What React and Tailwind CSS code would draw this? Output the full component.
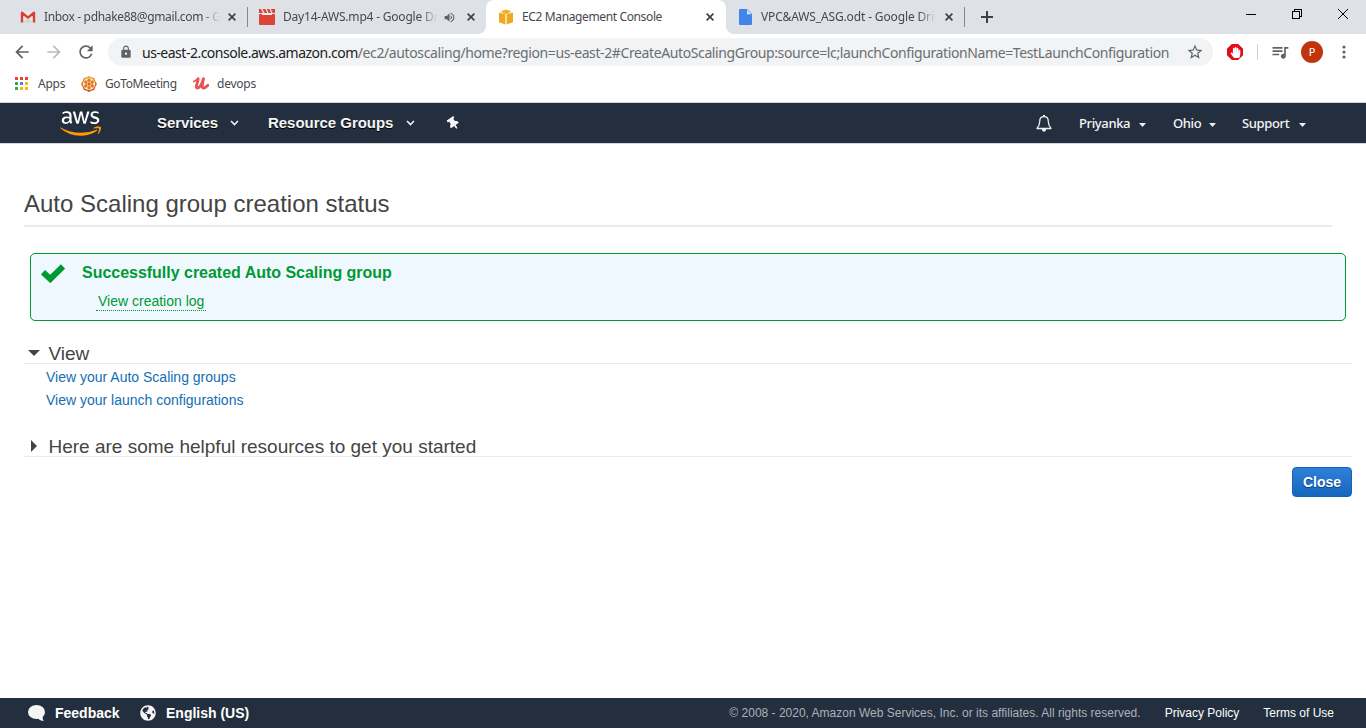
import React from "react";
import { FaAws, FaThumbtack, FaGlobeAmericas, FaHandPaper } from "react-icons/fa";
import { MdArrowBack, MdArrowForward, MdRefresh, MdLock, MdStarBorder, MdQueueMusic, MdVolumeUp } from "react-icons/md";

const Gmail = () => (
  <svg viewBox="0 0 16 12" className="h-3 w-4 shrink-0">
    <rect x="1" y="0.5" width="14" height="11" fill="#e9e9e9" />
    <path d="M3 11.5 8 7l5 4.5z" fill="#d5d5d5" />
    <path d="M2 11.5V1.8L8 6.6l6-4.800v9.700" fill="none" stroke="#d93f32" strokeWidth="2.4" strokeLinejoin="round" />
  </svg>
);

const Clapper = () => (
  <svg viewBox="0 0 16 16" className="size-4 shrink-0">
    <rect x="0" y="5" width="16" height="11" rx="1" fill="#db4437" />
    <path d="M0 0h2l2 4H0zM3.6 0h2.6l2 4H5.6zM7.7 0h2.6l2 4H9.7zM11.8 0H16v4h-2.2z" fill="#db4437" />
    <path d="M3 5.3h10" stroke="#fff" strokeWidth="1.2" />
  </svg>
);

const Cube = () => (
  <svg viewBox="0 0 16 16" className="size-4 shrink-0">
    <path d="M8 0.5 13.5 2.3 8 4 2.5 2.3z" fill="#f6b73c" />
    <path d="M1 3.2 7.5 5v10.5L1 13.3zM15 3.2 8.5 5v10.5l6.5-2.2z" fill="#efa91f" />
    <path d="M1 3.4 8 5l7-1.6M8 5v10.5" fill="none" stroke="#fde9bd" strokeWidth="0.9" />
    <path d="M4.5 1.8 8 1l3.5.8v2.4L8 5 4.5 4.2z" fill="#f4b02b" />
  </svg>
);

const Doc = () => (
  <svg viewBox="0 0 13 16" className="h-4 w-[13px] shrink-0">
    <path d="M1 0h7l5 5v10a1 1 0 0 1-1 1H1a1 1 0 0 1-1-1V1a1 1 0 0 1 1-1z" fill="#4285ea" />
    <path d="M8 0.8v4.4h4.4z" fill="#dce8fc" />
  </svg>
);

const Cross = () => (
  <svg viewBox="0 0 8 8" className="size-2 shrink-0">
    <path d="M0.6 0.6l6.8 6.8M7.4 0.6L0.6 7.4" stroke="#3c4043" strokeWidth="1.6" />
  </svg>
);

const APP_COLORS = [
  "fill-[#ea4335]", "fill-[#ea4335]", "fill-[#ea4335]",
  "fill-[#34a853]", "fill-[#4285f4]", "fill-[#fbbc05]",
  "fill-[#34a853]", "fill-[#fbbc05]", "fill-[#fbbc05]",
];
const Apps = () => (
  <svg viewBox="0 0 13 13" className="size-[13px] shrink-0">
    {APP_COLORS.map((c, i) => (
      <rect key={i} x={(i % 3) * 5} y={Math.floor(i / 3) * 5} width="3" height="3" className={c} />
    ))}
  </svg>
);

const Meeting = () => (
  <svg viewBox="0 0 16 16" className="size-4 shrink-0">
    <linearGradient id="petal" x1="0" y1="0" x2="0" y2="1">
      <stop offset="0" stopColor="#efa02c" />
      <stop offset="1" stopColor="#cf4a1c" />
    </linearGradient>
    <path d="M8 0l2.3 1.3L13.2 2l1 2.8L16 8l-1.8 3.2-1 2.8-2.9.7L8 16l-2.3-1.3L2.8 14l-1-2.8L0 8l1.8-3.2 1-2.8 2.9-.7z" fill="url(#petal)" />
    <circle cx="8" cy="8" r="6" fill="#fff4e0" />
    {[0, 60, 120, 180, 240, 300].map((a) => (
      <circle key={a} cx="8" cy="4.300" r="1.7" fill="#e07a1f" transform={`rotate(${a} 8 8)`} />
    ))}
    <circle cx="8" cy="8" r="1.7" fill="#d8641b" />
  </svg>
);

const Udemy = () => (
  <svg viewBox="0 0 16 13" className="h-[13px] w-4 shrink-0">
    <path d="M0.800 4.500C2.500 4 4 2.500 5 1.200" fill="none" stroke="#ea5252" strokeWidth="1.800" strokeLinecap="round" />
    <path d="M5.200 1.800C4.800 5 1.800 11 4.500 11c2.500 0 4.500-4.500 6-9.300C9.800 5.500 8 11 10.300 11c1.500 0 3.200-1.200 4.700-2.800" fill="none" stroke="#ea5252" strokeWidth="2.800" strokeLinecap="round" strokeLinejoin="round" />
  </svg>
);

const Chevron = () => (
  <svg viewBox="0 0 9 6" className="h-1.5 w-[9px] shrink-0">
    <path d="M1 1l3.500 3.500L8 1" fill="none" stroke="#eee" strokeWidth="1.700" />
  </svg>
);

const Caret = () => (
  <svg viewBox="0 0 7 4" className="mt-0.5 h-1 w-[7px] shrink-0">
    <path d="M0 0h7L3.500 4z" fill="#eee" />
  </svg>
);

const Bell = () => (
  <svg viewBox="0 0 16 17" className="h-[17px] w-4 shrink-0">
    <path d="M8 1.700C5 1.700 3.700 4 3.700 6.500c0 3.500-.9 5-2.700 7h14c-1.800-2-2.700-3.500-2.700-7C12.300 4 11 1.700 8 1.700z" fill="none" stroke="#eee" strokeWidth="1.300" strokeLinejoin="round" />
    <path d="M7 0h2v2H7zM5.800 14h4.400c0 1.500-1 2.700-2.200 2.700S5.800 15.500 5.800 14z" fill="#eee" />
  </svg>
);

const Bubble = () => (
  <svg viewBox="0 0 17 16" className="ml-7 h-4 w-[17px] shrink-0" fill="#f5f5f5">
    <ellipse cx="8.500" cy="7" rx="8.500" ry="7" />
    <path d="M10 13.500c1.500 1.500 3 2.300 5.800 2.500-1-1.200-1.300-2.500-1-5z" />
  </svg>
);

function TabStrip() {
  return (
    <div className="flex h-[34px] bg-white text-[12px] text-[#45494d]">
      <div className="flex w-[486px] rounded-br-lg bg-[#dee1e6]">
        <div className="flex w-[247px] items-center pl-5">
          <Gmail />
          <span className="ml-2 w-[176px] overflow-hidden whitespace-nowrap tracking-[-0.34px] mask-r-from-90%">Inbox - pdhake88@gmail.com - Gmail</span>
          <span className="ml-2"><Cross /></span>
        </div>
        <div className="flex w-[239px] items-center">
          <span className="h-5 w-px bg-[#85888c]" />
          <span className="ml-[11px]"><Clapper /></span>
          <span className="ml-2 w-[154px] overflow-hidden whitespace-nowrap tracking-[-0.2px] mask-r-from-90%">Day14-AWS.mp4 - Google Drive</span>
          <MdVolumeUp className="ml-[6px] size-[13px] shrink-0 text-[#5f6368]" />
          <span className="ml-[11px]"><Cross /></span>
        </div>
      </div>
      <div className="bg-[#dee1e6]">
        <div className="flex h-[34px] w-[240px] items-center rounded-t-lg bg-white pl-3">
          <Cube />
          <span className="ml-2 w-[180px] whitespace-nowrap tracking-[-0.37px]">EC2 Management Console</span>
          <span className="ml-[4px]"><Cross /></span>
        </div>
      </div>
      <div className="flex flex-1 items-center rounded-bl-lg bg-[#dee1e6]">
        <div className="flex h-[34px] w-[238px] items-center pl-[13px]">
          <Doc />
          <span className="ml-[9px] w-[175px] overflow-hidden whitespace-nowrap tracking-[-0.14px] mask-r-from-90%">VPC&amp;AWS_ASG.odt - Google Drive</span>
          <span className="ml-[9px]"><Cross /></span>
        </div>
        <span className="h-5 w-px bg-[#85888c]" />
        <svg viewBox="0 0 12 12" className="ml-4 size-3"><path d="M6 0v12M0 6h12" stroke="#3c4043" strokeWidth="2" /></svg>
        <svg viewBox="0 0 102 12" className="mb-1.5 ml-auto mr-[18px] h-3 w-[102px]" fill="none" stroke="#000" shapeRendering="crispEdges">
          <path d="M0 6.500h10M46.500 3.500h7v7h-7zM48.500 3.500v-2h7v7h-2" />
          <path d="M92 1l10 10M102 1l-10 10" shapeRendering="auto" />
        </svg>
      </div>
    </div>
  );
}

function Toolbar() {
  return (
    <div className="flex h-9 items-center bg-white text-[#5f6368]">
      <MdArrowBack className="ml-[12px] size-5" />
      <MdArrowForward className="ml-3 size-5 text-[#b9bbbe]" />
      <MdRefresh className="ml-3 size-5" />
      <div className="ml-3 flex h-7 w-[1105px] items-center rounded-full bg-[#f1f3f4]">
        <MdLock className="ml-[11px] size-[14px]" />
        <span className="ml-[9px] w-[1030px] whitespace-nowrap text-[14px] tracking-[-0.39px] text-[#6a6e72]"><span className="tracking-[-0.5px] text-[#202124]">us-east-2.console.aws.amazon.com</span>/ec2/autoscaling/home?region=us-east-2#CreateAutoScalingGroup:source=lc;launchConfigurationName=TestLaunchConfiguration</span>
        <MdStarBorder className="ml-[14px] size-[18px]" />
      </div>
      <div className="ml-[14px] flex size-4 items-center justify-center bg-[#e30d17] [clip-path:polygon(30%_0,70%_0,100%_30%,100%_70%,70%_100%,30%_100%,0_70%,0_30%)]">
        <FaHandPaper className="size-[11px] text-white" />
      </div>
      <span className="ml-[14px] h-4 w-px bg-[#cdd0d4]" />
      <MdQueueMusic className="ml-[12px] size-5" />
      <span className="ml-[11px] flex size-[22px] items-center justify-center rounded-full bg-[#bf360c] text-[11px] text-white">P</span>
      <svg viewBox="0 0 4 14" className="ml-[19px] h-[14px] w-1" fill="#5f6368"><circle cx="2" cy="2" r="1.600" /><circle cx="2" cy="7" r="1.600" /><circle cx="2" cy="12" r="1.600" /></svg>
    </div>
  );
}

function Bookmarks() {
  return (
    <div className="flex h-[33px] items-center border-b border-[#d3d6da] bg-white pb-[5px] pl-[15px] text-[12px] text-[#45494d]">
      <Apps />
      <span className="ml-[10px] w-[43px] tracking-[-0.25px]">Apps</span>
      <Meeting />
      <span className="ml-2 w-[88px] whitespace-nowrap tracking-[-0.37px]">GoToMeeting</span>
      <Udemy />
      <span className="ml-2 tracking-[-0.25px]">devops</span>
    </div>
  );
}

function Nav() {
  return (
    <div className="flex h-[41px] items-center border-b border-[#d5d9dd] bg-[#232f3e] text-[#f5f5f5]">
      <svg className="h-0 w-0">
        <linearGradient id="awsFill" gradientUnits="userSpaceOnUse" x1="0" y1="0" x2="0" y2="512">
          <stop offset="0.570" stopColor="#fff" />
          <stop offset="0.570" stopColor="#f90" />
        </linearGradient>
      </svg>
      <FaAws fill="url(#awsFill)" className="ml-[60px] h-[33px] w-[41px] shrink-0" />
      <span className="ml-[56px] w-[73px] whitespace-nowrap text-[15px] font-bold tracking-[-0.1px] [text-shadow:0_1px_0_#000]">Services</span>
      <Chevron />
      <span className="ml-[29px] w-[138px] whitespace-nowrap text-[15px] font-bold tracking-[-0.03px] [text-shadow:0_1px_0_#000]">Resource Groups</span>
      <Chevron />
      <FaThumbtack className="ml-8 size-[13px] -rotate-[35deg]" />
      <div className="ml-auto flex items-center pr-[60px] pt-px font-['Noto_Sans'] text-[13px] font-medium tracking-[-0.37px]">
        <Bell />
        <span className="ml-[27px] w-[60px]">Priyanka</span><Caret />
        <span className="ml-[27px] w-[36px]">Ohio</span><Caret />
        <span className="ml-[26px] w-[57px]">Support</span><Caret />
      </div>
    </div>
  );
}

function Content() {
  return (
    <main className="flex h-[554px] flex-col bg-white text-[#444]">
      <h1 className="ml-6 mr-[34px] mt-[42px] h-[41px] border-b-2 border-[#eaeaea] text-[24px] leading-9">Auto Scaling group creation status</h1>
      <div className="ml-[30px] mr-5 mt-[26px] flex h-[68px] rounded-[5px] border border-[#093] bg-[#f0f8ff] text-[#093]">
        <svg viewBox="0 0 24 19" className="ml-[10px] mt-[10px] h-[19px] w-6"><path d="M2 8.200 9.300 15 22 2.500" fill="none" stroke="#093" strokeWidth="6" /></svg>
        <div className="ml-[17px] flex flex-col items-start">
          <span className="mt-[8px] text-[16px] font-bold leading-[22px] tracking-[-0.02px]">Successfully created Auto Scaling group</span>
          <a className="ml-[14px] mt-[8px] border-b border-dotted border-[#093] px-0.5 text-[14px] leading-[18px]">View creation log</a>
        </div>
      </div>
      <div className="ml-6 mr-[14px] mt-[20px] flex h-[23px] items-center border-b border-[#eaeaea] text-[19px]">
        <svg viewBox="0 0 12 6" className="ml-[4px] mt-px h-1.5 w-3"><path d="M0 0h12L6 6z" fill="#444" /></svg>
        <span className="ml-2 pl-[0.500px] pt-1 leading-[22px]">View</span>
      </div>
      <div className="ml-[46px] mt-[2px] flex flex-col text-[14px] leading-[23px] text-[#146eb4]">
        <a>View your Auto Scaling groups</a>
        <a>View your launch configurations</a>
      </div>
      <div className="ml-6 mr-[14px] mt-[22px] flex h-[23px] items-center border-b border-[#eaeaea] text-[19px]">
        <svg viewBox="0 0 6 12" className="ml-[7px] mt-px h-3 w-1.5"><path d="M0 0v12l6-6z" fill="#444" /></svg>
        <span className="ml-[11px] pl-[0.500px] pt-1 leading-[22px]">Here are some helpful resources to get you started</span>
      </div>
      <button className="ml-auto mr-[14px] mt-[10px] h-[30px] w-[60px] rounded-[4px] border border-[#1464b4] bg-linear-to-b from-[#2f80d9] to-[#1666bd] text-[14px] font-bold text-white [text-shadow:0_1px_1px_#0b3e78]">Close</button>
    </main>
  );
}

function Footer() {
  return (
    <footer className="flex h-[30px] items-center bg-[#232f3e] text-white">
      <Bubble />
      <span className="ml-[10px] w-[85px] text-[14px] font-bold">Feedback</span>
      <FaGlobeAmericas className="size-4 text-[#f5f5f5]" />
      <span className="ml-[10px] text-[14px] font-bold">English (US)</span>
      <span className="ml-auto text-[12px] text-[#a9b1b8]">© 2008 - 2020, Amazon Web Services, Inc. or its affiliates. All rights reserved.</span>
      <span className="ml-6 text-[12px]">Privacy Policy</span>
      <span className="ml-6 mr-8 text-[12px]">Terms of Use</span>
    </footer>
  );
}

export default function App() {
  return (
    <div className="h-[728px] w-[1366px] overflow-hidden bg-white font-['Liberation_Sans',sans-serif]">
      <div className="font-['Noto_Sans',sans-serif]">
        <TabStrip />
        <Toolbar />
        <Bookmarks />
      </div>
      <Nav />
      <Content />
      <Footer />
    </div>
  );
}
